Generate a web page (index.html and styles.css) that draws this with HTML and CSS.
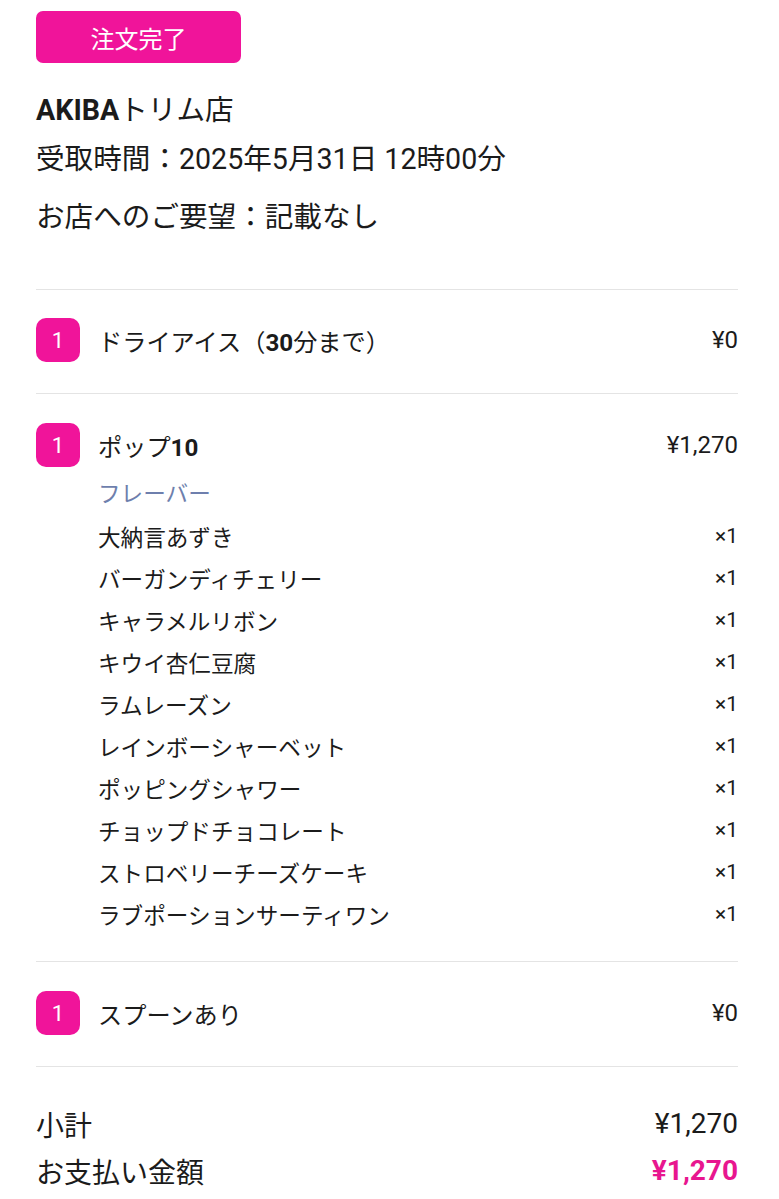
FILE: index.html
```html
<!DOCTYPE html>
<html lang="ja">
<head>
<meta charset="utf-8">
<title>注文完了</title>
<link rel="stylesheet" href="styles.css">
</head>
<body>
<div class="page">
  <div class="status">注文完了</div>
  <div class="store"><b>AKIBA</b>トリム店</div>
  <div class="time">受取時間：2025年5月31日 12時00分</div>
  <div class="request">お店へのご要望：記載なし</div>

  <div class="items">
    <div class="item">
      <div class="line">
        <span class="qty">1</span>
        <span class="name">ドライアイス（<b>30</b>分まで）</span>
        <span class="price">¥0</span>
      </div>
    </div>
    <div class="item item-options">
      <div class="line">
        <span class="qty">1</span>
        <span class="name">ポップ<b>10</b></span>
        <span class="price">¥1,270</span>
      </div>
      <div class="options">
        <div class="opt-title">フレーバー</div>
        <div class="opt"><span>大納言あずき</span><span class="mult">×1</span></div>
        <div class="opt"><span>バーガンディチェリー</span><span class="mult">×1</span></div>
        <div class="opt"><span>キャラメルリボン</span><span class="mult">×1</span></div>
        <div class="opt"><span>キウイ杏仁豆腐</span><span class="mult">×1</span></div>
        <div class="opt"><span>ラムレーズン</span><span class="mult">×1</span></div>
        <div class="opt"><span>レインボーシャーベット</span><span class="mult">×1</span></div>
        <div class="opt"><span>ポッピングシャワー</span><span class="mult">×1</span></div>
        <div class="opt"><span>チョップドチョコレート</span><span class="mult">×1</span></div>
        <div class="opt"><span>ストロベリーチーズケーキ</span><span class="mult">×1</span></div>
        <div class="opt"><span>ラブポーションサーティワン</span><span class="mult">×1</span></div>
      </div>
    </div>
    <div class="item">
      <div class="line">
        <span class="qty">1</span>
        <span class="name">スプーンあり</span>
        <span class="price">¥0</span>
      </div>
    </div>
  </div>

  <div class="totals">
    <div class="total-row"><span>小計</span><span>¥1,270</span></div>
    <div class="total-row pay"><span>お支払い金額</span><span class="pay-amount">¥1,270</span></div>
  </div>
</div>
</body>
</html>
```

FILE: styles.css
```css
* { box-sizing: border-box; }
html, body {
  margin: 0;
  padding: 0;
  background: #ffffff;
}
body {
  font-family: "Roboto", "Noto Sans CJK JP", sans-serif;
  color: #1b1b1b;
}
.page {
  width: 779px;
  padding: 11px 41px 0 36px;
}
.status {
  width: 205px;
  height: 52px;
  background: #f0149a;
  color: #ffffff;
  border-radius: 7px;
  font-size: 24px;
  display: flex;
  align-items: center;
  justify-content: center;
}
.store {
  margin-top: 27px;
  font-size: 28.6px;
  line-height: 40px;
}
.store b { font-weight: 700; }
.time {
  margin-top: 9px;
  font-size: 28.6px;
  line-height: 40px;
}
.request {
  margin-top: 18px;
  font-size: 28.6px;
  line-height: 40px;
}
.items {
  margin-top: 52px;
}
.item {
  border-top: 1px solid #e4e4e4;
  padding: 28px 0 31px;
}
.item-options {
  padding: 29px 0 26px;
}
.items .item:last-child {
  padding: 29px 0 31px;
  border-bottom: 1px solid #e4e4e4;
}
.line {
  display: flex;
  align-items: center;
  height: 44px;
}
.qty {
  width: 44px;
  height: 44px;
  border-radius: 10px;
  background: #f0149a;
  color: #ffffff;
  font-size: 22px;
  display: flex;
  align-items: center;
  justify-content: center;
  flex: none;
}
.name {
  flex: 1;
  margin-left: 18px;
  font-size: 24.2px;
}
.name b { font-weight: 700; }
.price {
  font-size: 24px;
}
.options {
  margin-left: 62px;
  margin-top: 10px;
}
.opt-title {
  font-size: 22.6px;
  line-height: 36px;
  color: #6e7fad;
  margin-bottom: 2px;
}
.opt {
  display: flex;
  justify-content: space-between;
  align-items: center;
  height: 42px;
  font-size: 22.6px;
}
.mult {
  font-size: 21px;
}
.totals {
  padding-top: 33px;
}
.total-row {
  display: flex;
  justify-content: space-between;
  align-items: center;
  height: 47px;
  font-size: 28px;
}
.pay-amount {
  color: #e8168f;
  font-weight: 700;
}
```
